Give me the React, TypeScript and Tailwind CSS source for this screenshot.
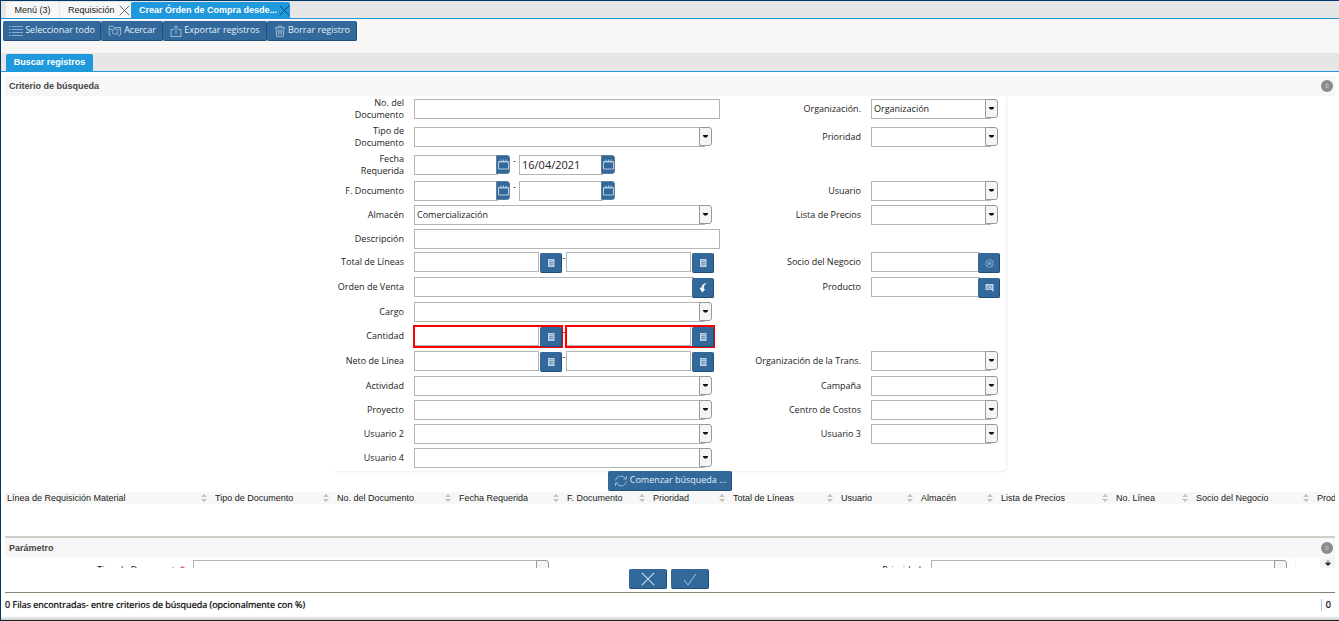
import React from "react";

const FIELD = "h-5 border border-[#b5b5b5] bg-white px-0.5 text-[#222] outline-none rounded-none";
const BLUE = "bg-[#33699a] text-[#e4eef6] border border-[#33699a] border-r-[#1f4f78] border-b-[#1f4f78]";

type Icon = () => React.ReactElement;

const ListIcon: Icon = () => (
  <svg viewBox="0 0 14 12" className="h-3 w-3.5" stroke="#a3c0d9" fill="none">
    <path d="M0 1.5h2M3 1.5h11M0 4.5h2M3 4.5h11M0 7.5h2M3 7.5h11M0 10.5h2M3 10.5h11" strokeWidth="0.8" />
  </svg>
);
const ZoomIcon: Icon = () => (
  <svg viewBox="0 0 14 12" className="h-3 w-3.5" stroke="#a3c0d9" fill="none" strokeWidth="0.9">
    <path d="M3 10H1.200V1.200h3.600l1 1.300h6.800V10M1.200 4.300h3" />
    <circle cx="7" cy="6.500" r="2.700" />
    <path d="M9 8.500l3 2.900M12.600 4.300h-2.500" />
  </svg>
);
const ExportIcon: Icon = () => (
  <svg viewBox="0 0 12 12" className="h-3 w-3" stroke="#a3c0d9" fill="none" strokeWidth="0.9">
    <path d="M4 4.500H1v7h10v-7H8M6 9V1M3.700 3L6 .8 8.300 3" />
  </svg>
);
const TrashIcon: Icon = () => (
  <svg viewBox="0 0 12 12" className="h-3 w-3" stroke="#a3c0d9" fill="none" strokeWidth="0.9">
    <path d="M1 2.700h10M4 2.500V1h4v1.500M2 3l.7 8.400h6.600L10 3M4.300 4.500v5.200M6 4.500v5.200M7.700 4.500v5.200" />
  </svg>
);
const RefreshIcon: Icon = () => (
  <svg viewBox="0 0 14 12" className="h-3 w-3.5" stroke="#a3c0d9" fill="none" strokeWidth="0.9">
    <path d="M1.500 5.500A5.400 5 0 0 1 11.500 3.500M12.500 1v3H9.500M12.500 6.500A5.400 5 0 0 1 2.500 8.500M1.500 11V8H4.500" />
  </svg>
);
const CalendarIcon: Icon = () => (
  <svg viewBox="0 0 11 11" className="h-[11px] w-[11px]" fill="none" stroke="#b4cde3">
    <path d="M.5 2.500h10v7.500H.5z" />
    <path d="M1 3h9M3 .5v2M5.500 .5v2M8 .5v2" />
  </svg>
);
const CalculatorIcon: Icon = () => (
  <svg viewBox="0 0 8 8" className="h-2 w-2">
    <path d="M1 0h6.500v8H1z" fill="#bdd1e4" />
    <path d="M2 1.700h4.500M2 3.500h4.500M2 5.300h4.500M3.500 3v4M5 3v4" stroke="#6a94bb" strokeWidth="0.7" />
  </svg>
);
const OrderIcon: Icon = () => (
  <svg viewBox="0 0 8 10" className="h-2.5 w-2" fill="#fff">
    <path d="M7.500 0C4.500.3 2.600 2 2.500 4.800H.5L3.300 9.500 6.300 6H4.800C4.500 4 5 1.800 7.500 0z" />
  </svg>
);
const PartnerIcon: Icon = () => (
  <svg viewBox="0 0 9 9" className="h-[9px] w-[9px]" fill="none" stroke="#94b5d3" strokeWidth="0.8">
    <circle cx="4.500" cy="4.500" r="3.800" />
    <path d="M3 3h3v1.500H3zM2.500 6.500c.5-1.500 3.500-1.500 4 0" />
  </svg>
);
const ProductIcon: Icon = () => (
  <svg viewBox="0 0 9 9" className="h-[9px] w-[9px]">
    <path d="M.5 1h8v6h-8z" fill="#c0d3e5" />
    <path d="M2 2.500v3.500" stroke="#5d8ab2" strokeWidth="0.7" />
    <circle cx="5" cy="4.300" r="1.700" fill="none" stroke="#4d7fac" strokeWidth="0.8" />
    <path d="M6 5.500l2.500 3" stroke="#e8f0f7" />
  </svg>
);

const Cross = ({ className, color }: { className: string; color: string }) => (
  <svg viewBox="0 0 12 12" className={className} stroke={color} fill="none">
    <path d="M.8.8l10.400 10.400M11.200.8L.8 11.200" />
  </svg>
);

const Chevrons = ({ up }: { up?: boolean }) => (
  <svg viewBox="0 0 12 12" className="h-3 w-3">
    <circle cx="6" cy="6" r="6" fill="#8b8b8b" />
    <path
      d={up ? "M4.300 5.500l1.700-1.500 1.700 1.500M4.300 8l1.700-1.500 1.700 1.500" : "M4.300 4l1.700 1.500L7.700 4M4.300 6.500l1.700 1.500 1.700-1.500"}
      stroke="#d0d0d0"
      fill="none"
    />
  </svg>
);

function Combo({ id, label, value = "", className }: { id: string; label: string; value?: string; className: string }) {
  return (
    <div className={`flex ${className}`}>
      <select id={id} aria-label={label} className={`${FIELD} min-w-0 flex-1 appearance-none text-[9px]`}>
        <option>{value}</option>
      </select>
      <span className="pointer-events-none -ml-1.5 flex h-[19px] w-[13px] items-center justify-center rounded-r-[3px] border border-[#999] bg-[#f5f5f5]">
        <svg viewBox="0 0 5 3" className="h-[3px] w-[5px]">
          <path d="M0 0h5v1L3.500 2.500h-2L0 1z" fill="#111" />
        </svg>
      </span>
    </div>
  );
}

function DateBox({ id, label, value = "" }: { id: string; label: string; value?: string }) {
  return (
    <div className="flex w-24">
      <input id={id} aria-label={label} defaultValue={value} className={`${FIELD} min-w-0 flex-1 pb-px text-[11px]`} />
      <button aria-label={`Calendario ${label}`} className="-ml-0.5 flex h-[19px] w-3.5 items-center justify-center rounded-r-[3px] border border-[#5f7f9c] bg-[#33699a] pb-px">
        <CalendarIcon />
      </button>
    </div>
  );
}

function Lookup({ id, label, icon: I, className, joined }: { id: string; label: string; icon: Icon; className: string; joined?: boolean }) {
  return (
    <div className={`flex ${className}`}>
      <input id={id} aria-label={label} className={`${FIELD} min-w-0 flex-1 text-[9px]`} />
      <button aria-label={`Buscar ${label}`} className={`${BLUE} relative top-px flex h-5 w-[22px] shrink-0 items-center justify-center rounded-[2px] ${joined ? "-ml-0.5" : "ml-px"}`}>
        <I />
      </button>
    </div>
  );
}

type Kind = "text" | "combo" | "dates" | "numbers" | "order" | "partner" | "product";
type Field = { label: string; kind: Kind; value?: string; invalid?: boolean };

const ROWS: { h: string; left: Field; right?: Field }[] = [
  { h: "h-7", left: { label: "No. del Documento", kind: "text" }, right: { label: "Organización.", kind: "combo", value: "Organización" } },
  { h: "h-7", left: { label: "Tipo de Documento", kind: "combo" }, right: { label: "Prioridad", kind: "combo" } },
  { h: "h-7", left: { label: "Fecha Requerida", kind: "dates", value: "16/04/2021" } },
  { h: "h-6", left: { label: "F. Documento", kind: "dates" }, right: { label: "Usuario", kind: "combo" } },
  { h: "h-6", left: { label: "Almacén", kind: "combo", value: "Comercialización" }, right: { label: "Lista de Precios", kind: "combo" } },
  { h: "h-[23px]", left: { label: "Descripción", kind: "text" } },
  { h: "h-6", left: { label: "Total de Líneas", kind: "numbers" }, right: { label: "Socio del Negocio", kind: "partner" } },
  { h: "h-[25px]", left: { label: "Orden de Venta", kind: "order" }, right: { label: "Producto", kind: "product" } },
  { h: "h-[25px]", left: { label: "Cargo", kind: "combo" } },
  { h: "h-6", left: { label: "Cantidad", kind: "numbers", invalid: true } },
  { h: "h-[25px]", left: { label: "Neto de Línea", kind: "numbers" }, right: { label: "Organización de la Trans.", kind: "combo" } },
  { h: "h-[25px]", left: { label: "Actividad", kind: "combo" }, right: { label: "Campaña", kind: "combo" } },
  { h: "h-6", left: { label: "Proyecto", kind: "combo" }, right: { label: "Centro de Costos", kind: "combo" } },
  { h: "h-6", left: { label: "Usuario 2", kind: "combo" }, right: { label: "Usuario 3", kind: "combo" } },
  { h: "h-6", left: { label: "Usuario 4", kind: "combo" } },
];

function Control({ field, id, right }: { field: Field; id: string; right?: boolean }) {
  const { label, kind, value, invalid } = field;
  if (kind === "text") return <input id={id} className={`${FIELD} w-full text-[9px]`} />;
  if (kind === "combo") return <Combo id={id} label={label} value={value} className={right ? "w-[127px]" : "w-[298px]"} />;
  if (kind === "dates")
    return (
      <div className="flex">
        <DateBox id={id} label={label} />
        <span className="w-[9px] text-center text-[9px] leading-3">-</span>
        <DateBox id={`${id}-to`} label={`${label} hasta`} value={value} />
      </div>
    );
  if (kind === "numbers") {
    const w = invalid ? "w-[148px] h-[21px] outline-2 outline-[#ff0000] -outline-offset-1" : "w-[148px]";
    return (
      <div className="flex">
        <Lookup id={id} label={label} icon={CalculatorIcon} className={w} />
        <span className="w-1 text-center text-[9px] leading-3">-</span>
        <Lookup id={`${id}-to`} label={`${label} hasta`} icon={CalculatorIcon} className={w} />
      </div>
    );
  }
  if (kind === "order") return <Lookup id={id} label={label} icon={OrderIcon} className="w-[300px]" joined />;
  return <Lookup id={id} label={label} icon={kind === "partner" ? PartnerIcon : ProductIcon} className="w-[129px]" joined />;
}

const COLUMNS: [string, string][] = [
  ["Línea de Requisición Material", "w-[208px]"],
  ["Tipo de Documento", "w-[122px]"],
  ["No. del Documento", "w-[122px]"],
  ["Fecha Requerida", "w-[108px]"],
  ["F. Documento", "w-[86px]"],
  ["Prioridad", "w-[80px]"],
  ["Total de Líneas", "w-[108px]"],
  ["Usuario", "w-[80px]"],
  ["Almacén", "w-[80px]"],
  ["Lista de Precios", "w-[115px]"],
  ["No. Línea", "w-[80px]"],
  ["Socio del Negocio", "w-[121px]"],
  ["Producto", "w-[120px]"],
];

const TOOLS: [string, Icon, string][] = [
  ["Seleccionar todo", ListIcon, "w-[98px]"],
  ["Acercar", ZoomIcon, "w-[62px]"],
  ["Exportar registros", ExportIcon, "w-[104px]"],
  ["Borrar registro", TrashIcon, "w-[90px]"],
];

function SectionHeader({ title, up }: { title: string; up?: boolean }) {
  return (
    <div className="flex h-5 shrink-0 items-center justify-between bg-[#f7f7f7] pr-0.5 pl-1">
      <h2 className="font-['Liberation_Sans',sans-serif] text-[9px] font-bold text-[#444]">{title}</h2>
      <button aria-label={`${up ? "Contraer" : "Expandir"} ${title}`}>
        <Chevrons up={up} />
      </button>
    </div>
  );
}

export default function App() {
  return (
    <div className="flex min-h-screen flex-col overflow-hidden border-t border-l border-[#003764] bg-white font-['Open_Sans',sans-serif] text-[9px] leading-3 text-[#222]">
      <nav className="flex h-[18px] shrink-0 items-end border-b border-[#2099dc] bg-[#e6e6e6] pl-[5px] font-['Liberation_Sans',sans-serif]">
        <button className="h-4 w-[53px] rounded-t-[2px] bg-[#f7f7f7]">Menú (3)</button>
        <button className="ml-px flex h-4 w-[71px] items-center justify-between rounded-t-[2px] bg-[#f7f7f7] pr-px pl-2">
          Requisición
          <Cross className="h-[11px] w-[11px]" color="#555" />
        </button>
        <button className="flex h-4 w-[159px] items-center justify-between rounded-t-[2px] bg-[#2099dc] pl-2 font-bold text-white">
          Crear Órden de Compra desde...
          <Cross className="h-[11px] w-[11px]" color="#0b3f66" />
        </button>
      </nav>

      <div className="flex h-[34px] shrink-0 items-start bg-[#f7f7f7] pt-0.5 pl-0.5">
        {TOOLS.map(([name, I, w]) => (
          <button key={name} className={`${BLUE} ${w} flex h-5 items-center justify-center gap-0.5 rounded-[2px] text-[9px]`}>
            <I />
            <span className="pb-0.5">{name}</span>
          </button>
        ))}
      </div>

      <div className="flex h-[19px] shrink-0 items-end border-b border-[#2099dc] bg-[#e6e6e6] pl-[5px] font-['Liberation_Sans',sans-serif]">
        <button className="h-[17px] w-[87px] rounded-t-[2px] bg-[#2099dc] pb-0.5 font-bold text-white">Buscar registros</button>
      </div>

      <main className="flex flex-1 flex-col pt-1 pr-1 pl-1">
        <SectionHeader title="Criterio de búsqueda" up />
        <form className="mx-auto -mt-px w-1/2 min-w-[672px] rounded-sm pb-px shadow-[1px_1px_2px_rgba(0,0,0,0.08)]" onSubmit={(e) => e.preventDefault()}>
          {ROWS.map(({ h, left, right }, i) => (
            <div key={left.label} className={`grid grid-cols-[80px_306px_151px_1fr] items-center ${h}`}>
              <label htmlFor={`l${i}`} className="pr-2.5 pl-0.5 text-right">
                {left.label}
              </label>
              <Control field={left} id={`l${i}`} />
              {right && (
                <>
                  <label htmlFor={`r${i}`} className="pr-2.5 text-right">
                    {right.label}
                  </label>
                  <Control field={right} id={`r${i}`} right />
                </>
              )}
            </div>
          ))}
        </form>
        <button className={`${BLUE} flex h-5 w-[124px] shrink-0 items-center justify-center gap-0.5 self-center rounded-[2px]`}>
          <RefreshIcon />
          <span className="pb-0.5">Comenzar búsqueda ...</span>
        </button>

        <div className="min-h-[44px] flex-1 overflow-hidden border-b-2 border-[#d0cfc7] pt-px">
          <table className="w-full table-fixed font-['Liberation_Sans',sans-serif]">
            <thead>
              <tr className="h-3 bg-[#f7f7f7]">
                {COLUMNS.map(([name, w]) => (
                  <th key={name} className={`${w} p-0 text-left font-normal whitespace-nowrap`}>
                    <div className="flex items-center justify-between pr-1.5 pl-0.5">
                      {name}
                      <svg viewBox="0 0 6 8" className="h-2 w-1.5 shrink-0" fill="#c3c2b8">
                        <path d="M3 0l3 3H0zM3 8L0 5h6z" />
                      </svg>
                    </div>
                  </th>
                ))}
              </tr>
            </thead>
          </table>
        </div>

        <SectionHeader title="Parámetro" />
        <div className="flex h-2.5 shrink-0 overflow-hidden">
          <div className="grid flex-1 grid-cols-[188px_1fr_382px_1fr] items-start border-r border-[#f3f3f3] pr-2">
            <label htmlFor="p-tipo" className="pt-1.5 pr-2 text-right">
              Tipo de Documento<span className="text-red-600">*</span>
            </label>
            <Combo id="p-tipo" label="Tipo de Documento" className="pt-0.5" />
            <label htmlFor="p-prio" className="pt-1.5 pr-2.5 text-right">
              Prioridad
            </label>
            <Combo id="p-prio" label="Prioridad" className="pt-0.5" />
          </div>
          <div className="ml-6 flex w-[15px] items-center justify-center bg-[#f3f3f3]">
            <svg viewBox="0 0 6 6" className="h-1.5 w-1.5">
              <path d="M3 0l3 3H0z" fill="#999" />
              <path d="M3 6L0 3h6z" fill="#222" />
            </svg>
          </div>
        </div>
        <div className="flex h-[25px] shrink-0 items-start justify-center gap-1 border-b border-[#8a8070] pt-px pr-0.5">
          <button aria-label="Cancelar" className={`${BLUE} flex h-5 w-[38px] items-center justify-center rounded-[2px]`}>
            <Cross className="h-3.5 w-3.5" color="#c5d8e8" />
          </button>
          <button aria-label="Aceptar" className={`${BLUE} flex h-5 w-[38px] items-center justify-center rounded-[2px]`}>
            <svg viewBox="0 0 14 13" className="h-[13px] w-3.5" stroke="#a9c5de" fill="none">
              <path d="M1 7l4 5L13 .8" />
            </svg>
          </button>
        </div>
      </main>
      <footer className="flex h-[23px] shrink-0 items-center justify-between pr-2 pl-1 font-medium text-black [text-shadow:0_0_1px_rgba(0,0,0,0.6)]">
        <span>0 Filas encontradas- entre criterios de búsqueda (opcionalmente con %)</span>
        <span className="border-l border-[#a3bff0] pl-1">0</span>
      </footer>
      <div className="h-[5px] shrink-0 border-b border-[#222] bg-gradient-to-b from-white to-[#ccc]" />
    </div>
  );
}
